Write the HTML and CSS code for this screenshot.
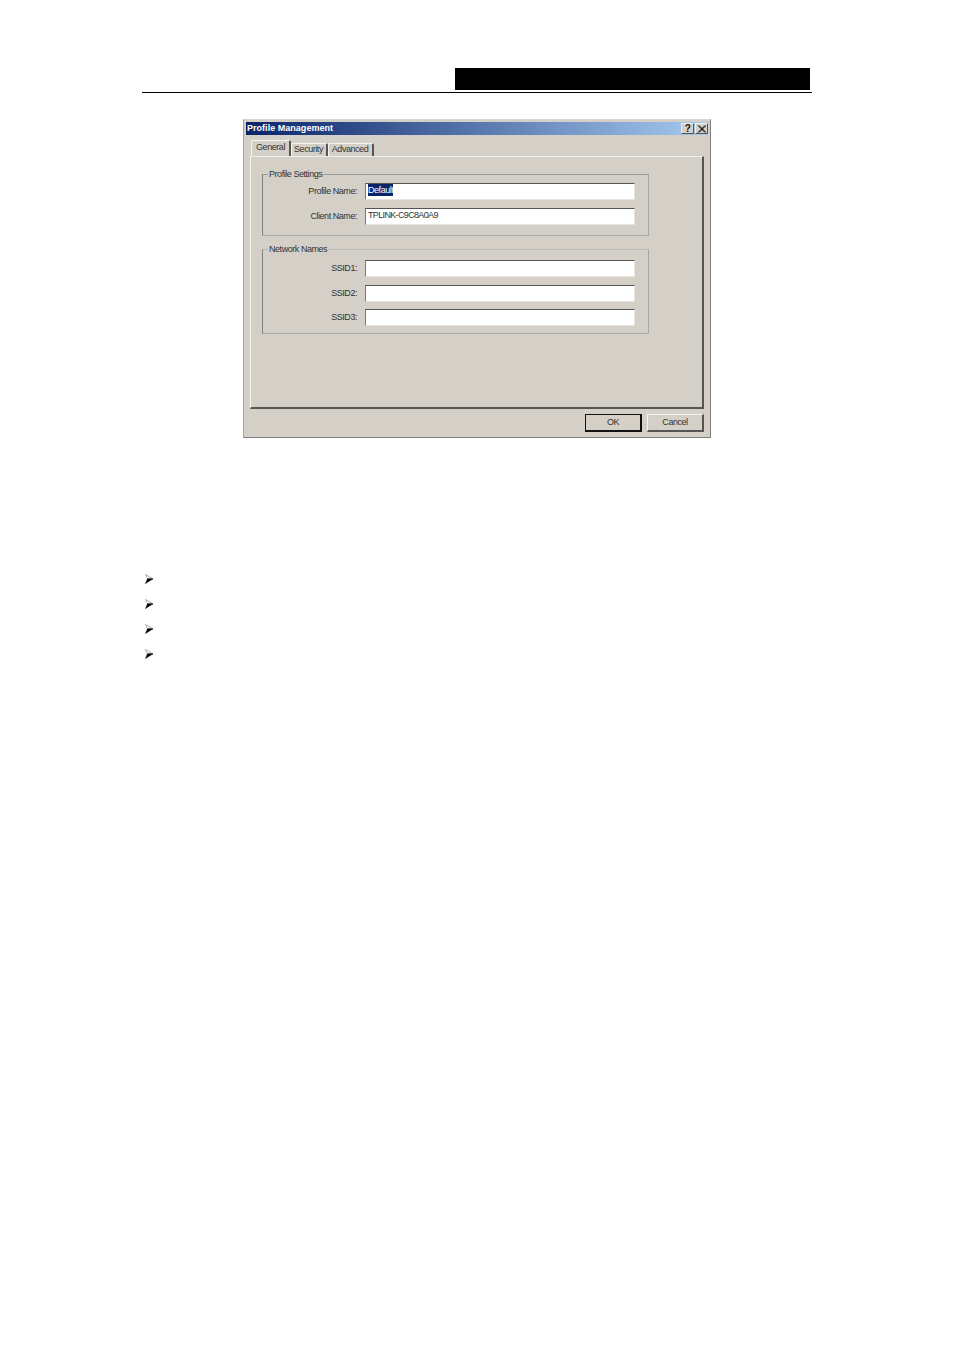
FILE: index.html
```html
<!DOCTYPE html>
<html lang="en">
<head>
    <meta charset="UTF-8">
    <title>Profile Management</title>
    <link rel="stylesheet" href="styles.css">
</head>
<body>
    <div class="page">
        <div class="header-band"></div>
        <div class="header-rule"></div>

        <!-- Dialog -->
        <div class="dialog">
            <div class="title-bar">
                <span class="title-text">Profile Management</span>
                <span class="title-btn help-btn">?</span>
                <span class="title-btn">
                    <svg width="9" height="8" viewBox="0 0 9 8"><path d="M1 0.5L8 7.5M2 0.5L9 7.5M8 0.5L1 7.5M9 0.5L2 7.5" stroke="#111" stroke-width="1" fill="none"/></svg>
                </span>
            </div>

            <div class="dialog-body">
                <div class="tabs">
                    <div class="tab active">General</div>
                    <div class="tab tab-security">Security</div>
                    <div class="tab tab-advanced">Advanced</div>
                </div>

                <div class="panel">
                    <fieldset class="group">
                        <legend>Profile Settings</legend>
                        <div class="form-row">
                            <label>Profile Name:</label>
                            <div class="field"><span class="selected">Default</span></div>
                        </div>
                        <div class="form-row">
                            <label>Client Name:</label>
                            <div class="field field-client">TPLINK-C9C8A0A9</div>
                        </div>
                    </fieldset>

                    <fieldset class="group group-network">
                        <legend>Network Names</legend>
                        <div class="form-row">
                            <label>SSID1:</label>
                            <div class="field"></div>
                        </div>
                        <div class="form-row">
                            <label>SSID2:</label>
                            <div class="field"></div>
                        </div>
                        <div class="form-row">
                            <label>SSID3:</label>
                            <div class="field"></div>
                        </div>
                    </fieldset>
                </div>

                <div class="buttons">
                    <div class="btn btn-default">OK</div>
                    <div class="btn">Cancel</div>
                </div>
            </div>
        </div>

        <!-- Bullet markers -->
        <div class="bullets">
            <svg class="bullet" width="9" height="10" viewBox="0 0 9 10"><path d="M0.5 0.5L8 4.8L2.5 4.8Z" fill="#fff" stroke="#999" stroke-width="0.8"/><path d="M8 4.8L0.5 9.5L2.5 4.8Z" fill="#000" stroke="#000" stroke-width="0.5"/></svg>
            <svg class="bullet" width="9" height="10" viewBox="0 0 9 10"><path d="M0.5 0.5L8 4.8L2.5 4.8Z" fill="#fff" stroke="#999" stroke-width="0.8"/><path d="M8 4.8L0.5 9.5L2.5 4.8Z" fill="#000" stroke="#000" stroke-width="0.5"/></svg>
            <svg class="bullet" width="9" height="10" viewBox="0 0 9 10"><path d="M0.5 0.5L8 4.8L2.5 4.8Z" fill="#fff" stroke="#999" stroke-width="0.8"/><path d="M8 4.8L0.5 9.5L2.5 4.8Z" fill="#000" stroke="#000" stroke-width="0.5"/></svg>
            <svg class="bullet" width="9" height="10" viewBox="0 0 9 10"><path d="M0.5 0.5L8 4.8L2.5 4.8Z" fill="#fff" stroke="#999" stroke-width="0.8"/><path d="M8 4.8L0.5 9.5L2.5 4.8Z" fill="#000" stroke="#000" stroke-width="0.5"/></svg>
        </div>
    </div>
</body>
</html>
```

FILE: styles.css
```css
* {
    box-sizing: border-box;
}
body {
    margin: 0;
    background: #fff;
    font-family: "Liberation Sans", Arial, sans-serif;
    font-size: 9px;
    letter-spacing: -0.45px;
    color: #333;
}
.page {
    width: 954px;
    height: 1350px;
    padding: 68px 142px 0;
}
.header-band {
    width: 355px;
    height: 22px;
    margin-left: 313px;
    background: #000;
}
.header-rule {
    width: 670px;
    height: 1px;
    margin-top: 2px;
    background: #000;
}

/* Dialog */
.dialog {
    width: 468px;
    height: 319px;
    margin: 26px 0 0 101px;
    padding: 2px;
    background: #d4d0c8;
    border: 1px solid #808080;
    border-top-color: #d8d5ce;
    border-left-color: #a8a6a0;
}
.title-bar {
    display: flex;
    align-items: center;
    height: 13px;
    padding: 0 0 0 1px;
    background: linear-gradient(to right, #0a246a, #a6caf0);
}
.title-text {
    flex: 1;
    padding-bottom: 2px;
    font-size: 9px;
    font-weight: bold;
    letter-spacing: 0.03px;
    color: #fff;
}
.title-btn {
    display: flex;
    align-items: center;
    justify-content: center;
    width: 13px;
    height: 11px;
    margin-left: 1px;
    background: #d4d0c8;
    border: 1px solid #555;
    border-top-color: #eee;
    border-left-color: #eee;
}
.help-btn {
    font-size: 10px;
    font-weight: bold;
    color: #111;
}
.dialog-body {
    padding: 5px 4px 0;
}
.tabs {
    display: flex;
    align-items: flex-end;
    height: 16px;
    padding-left: 1px;
}
.tab {
    height: 13px;
    padding-right: 1px;
    line-height: 11px;
    text-align: center;
    border: 1px solid #f4f4f0;
    border-right: 2px solid #555;
    border-bottom: none;
    border-radius: 2px 2px 0 0;
}
.tab.active {
    width: 40px;
    height: 16px;
    padding-right: 0;
    line-height: 13px;
}
.tab-security {
    width: 37px;
}
.tab-advanced {
    width: 46px;
}
.panel {
    height: 253px;
    padding: 12px 0 0 11px;
    border: 1px solid #f4f4f0;
    border-top-color: #efefea;
    border-right: 2px solid #555;
    border-bottom: 2px solid #555;
}
.group {
    width: 387px;
    margin: 0;
    padding: 3px 0 10px;
    border: 1px solid #a9a7a1;
    border-left-color: #808080;
    border-top-color: #9c9a94;
}
.group-network {
    margin-top: 8px;
    padding: 5px 0 7px;
    border-top-color: #bdbbb5;
}
.group legend {
    margin-left: 5px;
    padding: 0 1px;
    font-size: 9px;
    line-height: 11px;
}
.form-row {
    display: flex;
    align-items: center;
    height: 17px;
    margin-bottom: 8px;
}
.form-row:last-child {
    margin-bottom: 0;
}
.group-network .form-row {
    margin-bottom: 7.5px;
}
.group-network .form-row:last-child {
    margin-bottom: 0;
}
.form-row label {
    width: 94px;
    padding-bottom: 1px;
    text-align: right;
}
.field {
    width: 270px;
    height: 17px;
    margin-left: 8px;
    padding: 0 0 0 2px;
    line-height: 12px;
    background: #fff;
    border: 1px solid #e6e4df;
    border-top-color: #555;
    border-left-color: #777;
}
.field-client {
    letter-spacing: -0.65px;
}
.selected {
    display: inline-block;
    background: #0a246a;
    color: #fff;
}
.buttons {
    display: flex;
    justify-content: flex-end;
    gap: 5px;
    margin-top: 5px;
}
.btn {
    width: 57px;
    height: 18px;
    line-height: 14px;
    text-align: center;
    background: #d4d0c8;
    border: 1px solid #555;
    border-top-color: #f4f4f0;
    border-left-color: #f4f4f0;
    border-bottom-width: 2px;
    border-right-width: 2px;
}
.btn-default {
    border: 1px solid #111;
    border-bottom-width: 2px;
    border-right-width: 2px;
}

/* Bullets */
.bullets {
    display: flex;
    flex-direction: column;
    gap: 15px;
    margin: 136px 0 0 3px;
}
.bullet {
    display: block;
}
```
